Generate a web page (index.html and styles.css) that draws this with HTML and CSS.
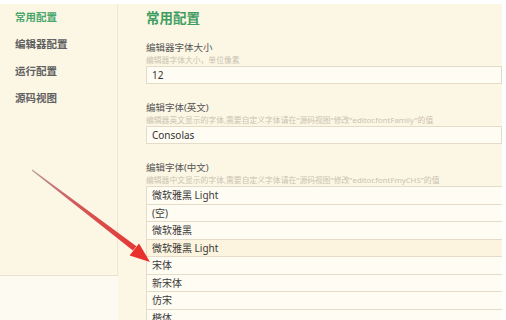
FILE: index.html
```html
<!DOCTYPE html>
<html lang="zh-CN">
<head>
<meta charset="utf-8">
<title>常用配置</title>
<link rel="stylesheet" href="styles.css">
</head>
<body>
<div class="app">
  <aside class="sidebar">
    <nav class="nav">
      <div class="nav-item active">常用配置</div>
      <div class="nav-item">编辑器配置</div>
      <div class="nav-item">运行配置</div>
      <div class="nav-item">源码视图</div>
    </nav>
    <div class="sidebar-rest"></div>
  </aside>
  <main class="main">
    <h1 class="title">常用配置</h1>
    <section class="field">
      <div class="label">编辑器字体大小</div>
      <div class="desc">编辑器字体大小，单位像素</div>
      <div class="input">12</div>
    </section>
    <section class="field">
      <div class="label">编辑字体(英文)</div>
      <div class="desc">编辑器英文显示的字体,需要自定义字体请在"源码视图"修改"editor.fontFamily"的值</div>
      <div class="input">Consolas</div>
    </section>
    <section class="field">
      <div class="label">编辑字体(中文)</div>
      <div class="desc">编辑器中文显示的字体,需要自定义字体请在"源码视图"修改"editor.fontFmyCHS"的值</div>
      <div class="list">
        <div class="row">微软雅黑 Light</div>
        <div class="row">(空)</div>
        <div class="row">微软雅黑</div>
        <div class="row hover">微软雅黑 Light</div>
        <div class="row">宋体</div>
        <div class="row">新宋体</div>
        <div class="row">仿宋</div>
        <div class="row">楷体</div>
      </div>
    </section>
  </main>
</div>
<svg class="arrow" width="506" height="320" viewBox="0 0 506 320">
  <defs>
    <linearGradient id="ag" x1="32" y1="170" x2="150" y2="262" gradientUnits="userSpaceOnUse">
      <stop offset="0" stop-color="#b89a9a"/>
      <stop offset="0.35" stop-color="#d25a5a"/>
      <stop offset="1" stop-color="#e8302c"/>
    </linearGradient>
  </defs>
  <polygon points="31.7,170.4 32.3,169.6 136.4,246.2 132.9,250.6" fill="url(#ag)"/>
  <polygon points="150,262 129.6,255.6 139,243.6" fill="#e8302c"/>
</svg>
</body>
</html>
```
FILE: styles.css
```css
html, body {
  margin: 0;
  padding: 0;
}
body {
  width: 506px;
  height: 320px;
  overflow: hidden;
  background: #ffffff;
  font-family: "Noto Sans", "Noto Sans CJK SC", sans-serif;
  position: relative;
}
.app {
  display: flex;
  margin-top: 4px;
  margin-right: 4px;
  height: 316px;
  background: #fcf6e5;
}
.sidebar {
  width: 118px;
  flex: none;
  display: flex;
  flex-direction: column;
}
.nav {
  height: 272px;
  box-sizing: border-box;
  border-right: 1px solid #f0e7d2;
  border-bottom: 1px solid #ebe2cc;
  padding-left: 15px;
}
.nav-item {
  height: 27px;
  line-height: 27px;
  font-size: 10.5px;
  font-weight: 600;
  color: #606060;
}
.nav-item.active {
  color: #4aa86c;
}
.sidebar-rest {
  flex: 1;
  background: #fdfaf2;
}
.main {
  flex: 1;
  min-width: 0;
  padding: 5px 0 0 28px;
  overflow: hidden;
}
.title {
  margin: 0 0 15px;
  height: 18px;
  line-height: 18px;
  font-size: 13.5px;
  font-weight: 700;
  color: #3f9d60;
}
.field {
  margin-bottom: 18px;
}
.label {
  height: 12px;
  line-height: 12px;
  font-size: 9.5px;
  color: #555555;
}
.desc {
  height: 10px;
  line-height: 10px;
  margin: 1px 0 1px;
  font-size: 7.8px;
  color: #cbc3b0;
  white-space: nowrap;
}
.input {
  height: 18px;
  box-sizing: border-box;
  border: 1px solid #e4dcc6;
  background: #fffcf4;
  line-height: 16px;
  padding-left: 5px;
  font-size: 10px;
  color: #333333;
}
.list {
  border-top: 1px solid #e4dcc6;
  border-left: 1px solid #e4dcc6;
}
.row {
  height: 17.5px;
  box-sizing: border-box;
  border-bottom: 1px solid #e4dcc6;
  background: #fffcf4;
  line-height: 16.5px;
  padding-left: 5px;
  font-size: 10px;
  color: #3a3a3a;
}
.row.hover {
  background: #fcf4de;
}
.arrow {
  position: absolute;
  left: 0;
  top: 0;
  pointer-events: none;
}
```
